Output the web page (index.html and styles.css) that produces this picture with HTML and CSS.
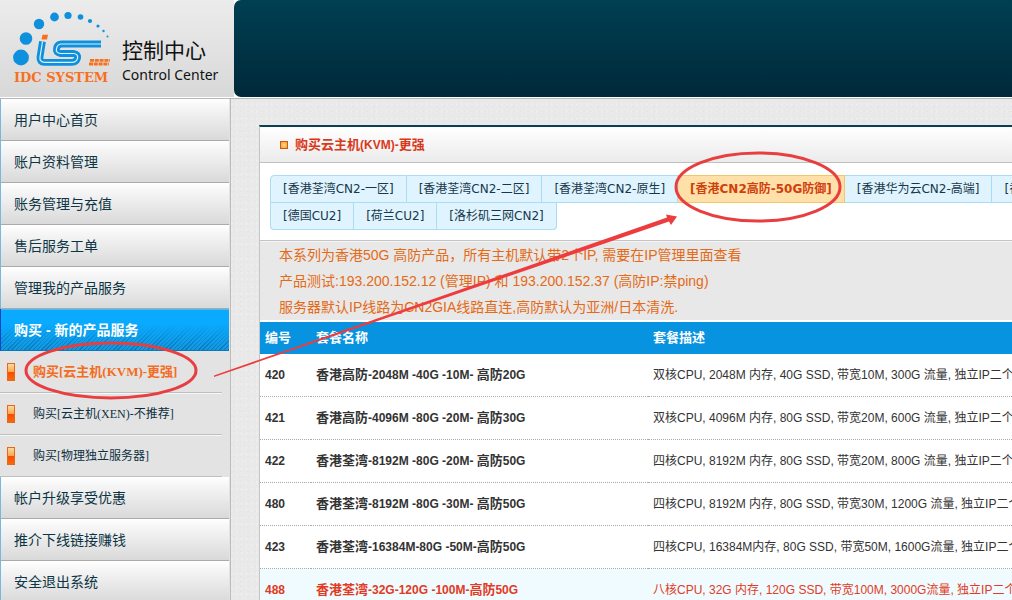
FILE: index.html
```
<!DOCTYPE html>
<html lang="zh-CN">
<head>
<meta charset="utf-8">
<title>控制中心</title>
<link rel="stylesheet" href="styles.css">
</head>
<body>
<header class="header">
  <div class="brand">
    <svg class="logo" viewBox="0 0 100 76" role="img" aria-label="IDC SYSTEM">
      <g fill="#0e90dc">
        <circle cx="9" cy="47.500" r="7.900"/><circle cx="14" cy="28.500" r="6.300"/><circle cx="27" cy="14" r="5.200"/><circle cx="42.500" cy="7" r="4.400"/><circle cx="56" cy="5.500" r="3.600"/><circle cx="68.500" cy="7" r="2.800"/><circle cx="78" cy="11" r="2.100"/><circle cx="86" cy="16" r="1.600"/><circle cx="91.500" cy="21" r="1.200"/><circle cx="95.500" cy="26.500" r="1"/>
      </g>
      <path d="M30.500 24.700h5.500l-1 4.800h-5.500z" fill="#f7701d"/>
      <g fill="none" stroke-linejoin="round">
        <path d="M30.500 31.500L28 47q-.6 5.300 4.500 5.300H60q4.500 0 5.500-4t-3.500-4.800H48.500q-5-.5-4-5t5-4.500H89" stroke="#0e90dc" stroke-width="6.800"/>
        <path d="M30.500 31.500L28 47q-.6 5.300 4.500 5.300H60q4.500 0 5.500-4t-3.500-4.800H48.500q-5-.5-4-5t5-4.500H89" stroke="#d9f2fb" stroke-width="1.200"/>
      </g>
      <path d="M78 50.300h20M77 54h20" stroke="#f7701d" stroke-width="2.800" stroke-dasharray="4 .8"/>
      <text x="2" y="72" class="logo-text">IDC SYSTEM</text>
    </svg>
    <div class="brand-name">
      <span class="brand-zh">控制中心</span>
      <span class="brand-en">Control Center</span>
    </div>
  </div>
  <div class="banner"></div>
</header>
<div class="layout">
  <nav class="sidebar">
    <a class="item" href="#">用户中心首页</a>
    <a class="item" href="#">账户资料管理</a>
    <a class="item" href="#">账务管理与充值</a>
    <a class="item" href="#">售后服务工单</a>
    <a class="item" href="#">管理我的产品服务</a>
    <a class="item active" href="#">购买 - 新的产品服务</a>
    <a class="sub current" href="#"><i class="bar"></i>购买[云主机(KVM)-更强]</a>
    <a class="sub" href="#"><i class="bar"></i>购买[云主机(XEN)-不推荐]</a>
    <a class="sub" href="#"><i class="bar"></i>购买[物理独立服务器]</a>
    <a class="item" href="#">帐户升级享受优惠</a>
    <a class="item" href="#">推介下线链接赚钱</a>
    <a class="item" href="#">安全退出系统</a>
  </nav>
  <main class="main">
    <section class="panel">
      <h1 class="title"><i class="mark"></i><span><b class="han">购买云主机</b>(KVM)-<b class="han">更强</b></span></h1>
      <div class="tabs">
        <div class="tab-row">
          <a class="tab" href="#">[香港荃湾CN2-一区]</a><a class="tab" href="#">[香港荃湾CN2-二区]</a><a class="tab" href="#">[香港荃湾CN2-原生]</a><a class="tab selected" href="#">[香港CN2高防-50G防御]</a><a class="tab" href="#">[香港华为云CN2-高端]</a><a class="tab" href="#">[香港]</a>
        </div>
        <div class="tab-row second">
          <a class="tab" href="#">[德国CU2]</a><a class="tab" href="#">[荷兰CU2]</a><a class="tab" href="#">[洛杉矶三网CN2]</a>
        </div>
      </div>
      <div class="notice">
        <p>本系列为香港50G 高防产品，所有主机默认带2个IP, 需要在IP管理里面查看</p>
        <p>产品测试:193.200.152.12 (管理IP) 和 193.200.152.37 (高防IP:禁ping)</p>
        <p>服务器默认IP线路为CN2GIA线路直连,高防默认为亚洲/日本清洗.</p>
      </div>
      <table class="plans">
        <colgroup><col class="c-id"><col class="c-name"><col></colgroup>
        <thead><tr><th><b class="han">编号</b></th><th><b class="han">套餐名称</b></th><th><b class="han">套餐描述</b></th></tr></thead>
        <tbody>
          <tr><th>420</th><th><b class="han">香港高防</b>-2048M -40G -10M- <b class="han">高防</b>20G</th><td>双核CPU, 2048M 内存, 40G SSD, 带宽10M, 300G 流量, 独立IP二个</td></tr>
          <tr><th>421</th><th><b class="han">香港高防</b>-4096M -80G -20M- <b class="han">高防</b>30G</th><td>双核CPU, 4096M 内存, 80G SSD, 带宽20M, 600G 流量, 独立IP二个</td></tr>
          <tr><th>422</th><th><b class="han">香港荃湾</b>-8192M -80G -20M- <b class="han">高防</b>50G</th><td>四核CPU, 8192M 内存, 80G SSD, 带宽20M, 800G 流量, 独立IP二个</td></tr>
          <tr><th>480</th><th><b class="han">香港荃湾</b>-8192M -80G -30M- <b class="han">高防</b>50G</th><td>四核CPU, 8192M 内存, 80G SSD, 带宽30M, 1200G 流量, 独立IP二个</td></tr>
          <tr><th>423</th><th><b class="han">香港荃湾</b>-16384M-80G -50M-<b class="han">高防</b>50G</th><td>四核CPU, 16384M内存, 80G SSD, 带宽50M, 1600G流量, 独立IP二个</td></tr>
          <tr class="hot"><th>488</th><th><b class="han">香港荃湾</b>-32G-120G -100M-<b class="han">高防</b>50G</th><td>八核CPU, 32G 内存, 120G SSD, 带宽100M, 3000G流量, 独立IP二个</td></tr>
        </tbody>
      </table>
    </section>
  </main>
</div>
<svg class="notes" width="1012" height="600" viewBox="0 0 1012 600" aria-hidden="true">
  <g fill="none" stroke="#e93e40" stroke-width="3">
    <ellipse cx="111" cy="370.500" rx="85" ry="27.500"/>
    <ellipse cx="758" cy="187" rx="82" ry="34"/>
  </g>
  <path d="M214 375.500L667 217.500L666 214.500L677 216.500L671 225L669 221.500L214 377z" fill="#ee3b3e"/>
</svg>
</body>
</html>
```
FILE: styles.css
```
* { box-sizing: border-box; }
html { height: 100%; overflow: hidden; }
body {
  margin: 0;
  min-height: 100%;
  display: flex;
  flex-direction: column;
  background: #e9e9e9;
  font: 12px/20px "Liberation Sans", "Noto Sans CJK SC", sans-serif;
  color: #333;
}
a { color: inherit; text-decoration: none; }
.header { display: flex; height: 99px; border-bottom: 1px solid #b5b8ba; background: #fff; }
.brand {
  width: 234px;
  height: 97px;
  flex: none;
  display: flex;
  align-items: flex-start;
  padding: 10px 0 0 12px;
  background: linear-gradient(#ececec, #d8d8d8);
}
.logo { width: 100px; height: 76px; overflow: visible; }
.logo-text { font: bold 13px "DejaVu Serif", serif; fill: #f7701d; }
.brand-name { display: flex; flex-direction: column; padding: 29px 0 0 10px; color: #111; white-space: nowrap; }
.brand-zh { font-size: 21px; line-height: 24px; }
.brand-en { font: 14px/24px "Noto Sans", sans-serif; }
.banner { flex: 1; height: 97px; background: linear-gradient(#003f52, #00293a); border-radius: 7px 0 0 7px; }
.layout { flex: 1; display: flex; }
.sidebar { flex: none; width: 231px; border-right: 1px solid #bbb; background: #e3e3e3; padding-right: 1px; }
.item {
  display: block;
  height: 42px;
  padding: 0 13px;
  border-left: 1px solid #79b8dc;
  border-bottom: 1px solid #aaa;
  background: linear-gradient(#fff, #f6f6f6 20%, #d9d9d9);
  font-size: 14px;
  line-height: 42px;
  color: #0d3545;
}
.item.active {
  border-left-color: #0645c0;
  border-bottom-color: #087bb8;
  background:
    linear-gradient(#09aaff 35%, rgba(9, 170, 255, 0)),
    repeating-linear-gradient(135deg, #0678b9 0 1px, #1597df 1px 3px);
  box-shadow: inset 0 1px #43c0f0;
  color: #fff;
  font-weight: bold;
}
.sub {
  display: flex;
  align-items: center;
  gap: 18px;
  height: 42px;
  margin-right: 7px;
  padding-left: 7px;
  border-bottom: 1px solid #bfbfbf;
  box-shadow: 0 1px #f7f7f7;
  font-family: "Liberation Serif", "Noto Sans CJK SC", serif;
  color: #0d2f3f;
}
.sub.current { color: #f36c21; font-size: 13px; font-weight: bold; }
.bar { width: 8px; height: 18px; border: 1px solid #e56a12; background: linear-gradient(#fbd9a0, #f9a64c 50%, #ff4800 50%, #f56a10); }
.main {
  flex: 1;
  min-width: 0;
  padding: 26px 0 0 28px;
  background:
    radial-gradient(#e4e4e4 1px, transparent 1px) 0 0 / 7px 5px,
    radial-gradient(#eeeeee 1px, transparent 1px) 3px 2px / 5px 7px,
    #e9e9e9;
}
.panel { overflow: hidden; border-left: 1px solid #c4c4c4; border-top: 2px solid #0b4050; background: #fff; }
.title {
  display: flex;
  align-items: center;
  gap: 7px;
  height: 36px;
  margin: 0;
  padding-left: 20px;
  background: linear-gradient(#fff, #ebebeb);
  border-bottom: 1px solid #c0c0c0;
  font-size: 12px;
  color: #d9391b;
}
.han { font-size: 13px; font-weight: bold; line-height: 18px; }
.mark { width: 8px; height: 8px; border: 1px solid #cc5a1e; background: radial-gradient(#ffe08a, #f59a1d); }
.tabs { padding: 12px 10px 10px; border-bottom: 1px solid #c4c4c4; font-family: "DejaVu Sans", "Noto Sans CJK SC", sans-serif; }
.tab-row { display: flex; white-space: nowrap; }
.tab {
  flex: none;
  height: 28px;
  padding: 0 12px;
  border: 1px solid #aadcf2;
  border-left-width: 0;
  background: #dff4fe;
  line-height: 27px;
  color: #17374a;
}
.tab:first-child { border-left-width: 1px; border-radius: 4px 0 0 0; }
.second .tab { height: 27px; border-top: 0; }
.second .tab:first-child { border-radius: 0 0 0 4px; }
.second .tab:last-child { border-radius: 0 0 4px 0; }
.tab.selected { background: #ffe0a8; border-color: #f0c869; color: #d0400d; font-weight: bold; }
.notice { height: 81px; padding: 0 19px; background: #e8e8e8; border-top: 1px solid #f5f5f5; border-bottom: 2px solid #fff; font-size: 14px; line-height: 26px; color: #e56a16; white-space: nowrap; }
.notice p { margin: 0; }
.plans { width: 100%; table-layout: fixed; border-spacing: 0; }
.c-id { width: 51px; }
.c-name { width: 337px; }
.plans th, .plans td { padding: 0 0 0 5px; text-align: left; white-space: nowrap; height: 43px; border-bottom: 1px dotted #aaa; }
.plans thead th { height: 32px; border: 0; background: #0893e1; color: #fff; }
.hot { background: #effbfe; color: #e23a24; }
.notes { position: absolute; left: 0; top: 0; pointer-events: none; }
```
